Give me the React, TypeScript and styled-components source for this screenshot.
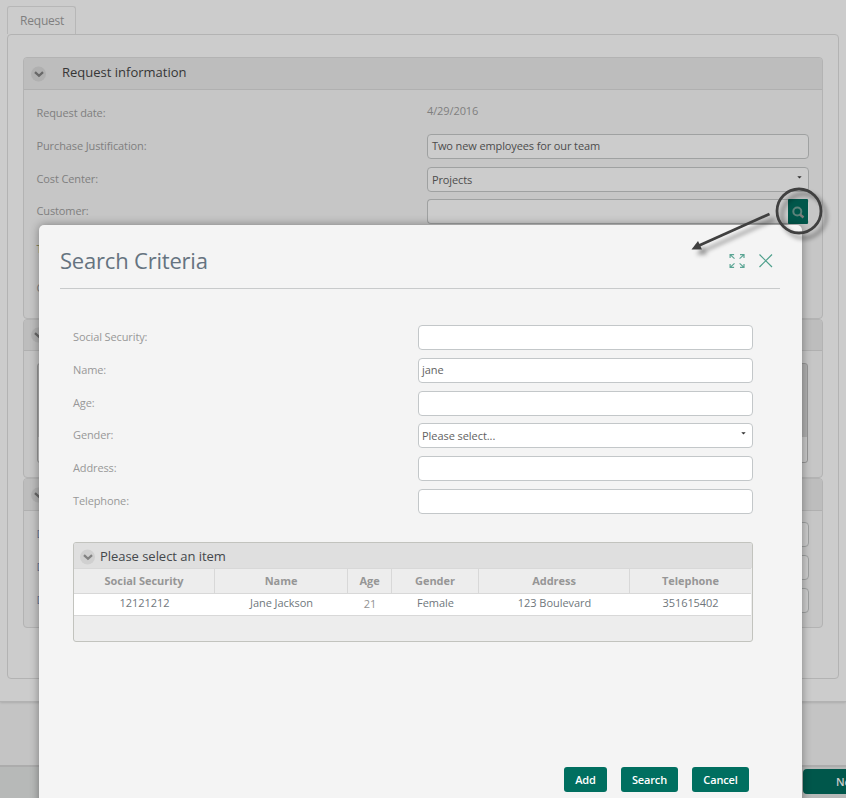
import React from "react";
import styled, { createGlobalStyle } from "styled-components";

const GlobalStyle = createGlobalStyle`
  *, *::before, *::after { box-sizing: border-box; }
  body { margin: 0; overflow: hidden; font: 11px/15px "Open Sans", sans-serif; background: #b7b9b8; }
`;

const Screen = styled.div`
  position: relative;
  width: 846px;
  height: 798px;
  overflow: hidden;
  display: flex;
  flex-direction: column;
`;

const Sheet = styled.main`
  height: 702px;
  flex: none;
  padding: 6px 7px 0;
  background: #cccccc;
  border-bottom: 1px solid #b2b2b2;
  box-shadow: 0 1px 2px rgba(0, 0, 0, 0.12);
  z-index: 1;
`;

const Tab = styled.div`
  width: 69px;
  height: 28px;
  padding-left: 12px;
  border: 1px solid #b7b7b7;
  border-bottom: 0;
  border-radius: 3px 3px 0 0;
  font-size: 12px;
  letter-spacing: -0.2px;
  line-height: 27px;
  color: #7f7f7f;
`;

const TabPanel = styled.div`
  width: 832px;
  height: 645px;
  padding: 22px 15px;
  border: 1px solid #b3b3b3;
  border-radius: 4px;
`;

const Section = styled.section<{ $height: number }>`
  height: ${(p) => p.$height}px;
  background: #c6c6c6;
  border: 1px solid #b3b3b3;
  border-radius: 4px;
  overflow: hidden;
`;

const SectionHeader = styled.header<{ $height: number }>`
  display: flex;
  align-items: center;
  gap: 16px;
  height: ${(p) => p.$height}px;
  padding: 0 7px;
  background: #bdbdbd;
  border-bottom: 1px solid #b0b0b0;
  font-size: 13px;
  color: #363636;
`;

const SectionTitle = styled.span`
  padding-bottom: 3px;
`;

const SectionRows = styled.div<{ $top: number }>`
  padding: ${(p) => p.$top}px 13px 0;
`;

const Row = styled.div<{ $height?: number }>`
  display: grid;
  grid-template-columns: 390px 382px;
  align-items: center;
  height: ${(p) => p.$height ?? 33}px;
  color: #7f7f7f;
`;

const Label = styled.span<{ $lift?: number; $color?: string }>`
  padding-bottom: ${(p) => p.$lift ?? 2}px;
  margin-left: -0.5px;
  letter-spacing: -0.12px;
  color: ${(p) => p.$color ?? "inherit"};
`;

const Value = styled.span`
  padding-bottom: 6px;
  letter-spacing: -0.1px;
`;

const Field = styled.div`
  display: flex;
  justify-content: space-between;
  height: 25px;
  padding: 0 6px 0 4px;
  line-height: 22px;
  letter-spacing: -0.12px;
  color: #4c4c4c;
  background: #cccccc;
  border: 1px solid #9fa1a1;
  border-radius: 4px;
`;

const SelectField = styled(Field)`
  line-height: 24px;
`;

const LookupField = styled(Field)`
  margin-top: -1px;
  padding-right: 1px;
  border-right: 0;
`;

const LookupButton = styled.span`
  display: flex;
  align-items: center;
  justify-content: center;
  width: 20px;
  height: 25px;
  margin-top: -1px;
  border-radius: 1px;
  background: #00574b;
`;

const TextArea = styled.div`
  height: 100px;
  margin: 12px 14px 0 13px;
  background: linear-gradient(#afafaf 73px, #c8c8c8 73px);
  border: 1px solid #969696;
  border-radius: 3px;
`;

const Gutter = styled.div`
  height: 63px;
  flex: none;
  background: #c4c4c4;
`;

const Footer = styled.footer`
  flex: 1;
  display: flex;
  justify-content: flex-end;
  padding-top: 2px;
  background: #b7b9b8;
  border-top: 2px solid #acacac;
`;

const NextButton = styled.div`
  width: 43px;
  height: 25px;
  padding-left: 33px;
  border-radius: 4px 0 0 4px;
  background: #00574b;
  color: #cccccc;
  font-weight: 600;
  line-height: 25px;
  overflow: hidden;
  white-space: nowrap;
`;

const Modal = styled.div`
  position: absolute;
  z-index: 2;
  left: 39px;
  top: 225px;
  width: 763px;
  height: 620px;
  padding: 0 22px 0 21px;
  background: #f4f4f4;
  border-radius: 5px;
  box-shadow: 0 0 10px rgba(0, 0, 0, 0.38);
`;

const ModalHeader = styled.header`
  display: flex;
  align-items: center;
  height: 64px;
  padding: 8px 7px 0 0;
  border-bottom: 1px solid #c8cacb;
`;

const ModalTitle = styled.h1`
  flex: 1;
  margin: 0;
  padding-bottom: 2px;
  font-size: 22px;
  line-height: 30px;
  letter-spacing: -0.2px;
  font-weight: 400;
  color: #657380;
`;

const ModalForm = styled.div`
  display: grid;
  grid-template-columns: 345px 335px;
  grid-template-rows: 33px 33px 32px 33px 33px 25px;
  padding: 36px 0 0 13px;
`;

const ModalLabel = styled.label`
  line-height: 24px;
  letter-spacing: -0.12px;
  color: #989898;
`;

const ModalField = styled.div<{ $select?: boolean }>`
  display: flex;
  justify-content: space-between;
  height: 25px;
  padding: 0 6px 0 3px;
  background: #ffffff;
  border: 1px solid #c3c7c9;
  border-radius: 4px;
  line-height: ${(p) => (p.$select ? 24 : 22)}px;
  letter-spacing: -0.06px;
  color: #626262;
`;

const TableBox = styled.div`
  width: 680px;
  height: 100px;
  margin: 28px 0 0 13px;
  background: #ededed;
  border: 1px solid #c2c3be;
  border-radius: 3px;
  overflow: hidden;
`;

const TableTitle = styled.div`
  display: flex;
  align-items: center;
  gap: 5px;
  height: 25px;
  padding: 2px 6px 0;
  background: #dfdfdf;
  font-size: 13px;
  letter-spacing: -0.04px;
  color: #44484c;
`;

const TableRow = styled.div<{ $head?: boolean }>`
  display: grid;
  grid-template-columns: 141px 133px 44px 87px 151px 121px;
  width: 677px;
  height: ${(p) => (p.$head ? 26 : 22)}px;
  background: ${(p) => (p.$head ? "#ededed" : "#ffffff")};
  border: solid #d8d8d8;
  border-width: ${(p) => (p.$head ? "1px 0" : "0 0 1px")};
  text-align: center;
  font-weight: ${(p) => (p.$head ? 700 : 400)};
  line-height: ${(p) => (p.$head ? 24 : 18)}px;
  letter-spacing: -0.05px;
  color: ${(p) => (p.$head ? "#969696" : "#6f777c")};
`;

const Cell = styled.span<{ $divider?: boolean; $muted?: boolean }>`
  border-right: ${(p) => (p.$divider ? "1px solid #d8d8d8" : "0")};
  padding-top: ${(p) => (p.$muted ? 1 : 0)}px;
  color: ${(p) => (p.$muted ? "#929292" : "inherit")};
`;

const Actions = styled.div`
  display: flex;
  justify-content: flex-end;
  padding: 125px 31px 0 0;
`;

const ActionButton = styled.button<{ $width: number }>`
  width: ${(p) => p.$width}px;
  height: 25px;
  margin-left: 14px;
  padding: 0;
  border: 0;
  border-radius: 3px;
  background: #006f60;
  color: #ffffff;
  font: 600 11px/25px "Open Sans", sans-serif;
  letter-spacing: -0.15px;
`;

const Callout = styled.svg`
  position: absolute;
  z-index: 3;
  left: 680px;
  top: 180px;
`;

const CaretSvg = styled.svg`
  flex: none;
  margin-top: 8px;
`;

const ToolIcon = styled.svg<{ $gap?: number }>`
  flex: none;
  margin-left: ${(p) => p.$gap ?? 0}px;
`;

const Caret = () => (
  <CaretSvg width="5" height="3" viewBox="0 0 5 3">
    <path d="M.3 .3h4.400L2.500 2.600z" fill="#303030" />
  </CaretSvg>
);

const Chevron = ({ dark }: { dark?: boolean }) => (
  <svg width="15" height="16" viewBox="0 0 15 16">
    <circle cx="7.5" cy="8" r="7.5" fill={dark ? "#b0b0b0" : "#d0d0d0"} />
    <path d="M4 6.2 8 9.8 12 6.2" fill="none" stroke={dark ? "#686868" : "#828282"} strokeWidth="2.3" />
  </svg>
);

const formFields = [
  { label: "Social Security:", value: "" },
  { label: "Name:", value: "jane" },
  { label: "Age:", value: "" },
  { label: "Gender:", value: "Please select...", select: true },
  { label: "Address:", value: "" },
  { label: "Telephone:", value: "" },
];

const columns = ["Social Security", "Name", "Age", "Gender", "Address", "Telephone"];
const record = ["12121212", "Jane Jackson", "21", "Female", "123 Boulevard", "351615402"];

export default function App() {
  return (
    <Screen>
      <GlobalStyle />
      <Sheet>
        <Tab>Request</Tab>
        <TabPanel>
          <Section $height={262}>
            <SectionHeader $height={32}>
              <Chevron dark />
              <SectionTitle>Request information</SectionTitle>
            </SectionHeader>
            <SectionRows $top={7}>
              <Row>
                <Label>Request date:</Label>
                <Value>4/29/2016</Value>
              </Row>
              <Row>
                <Label>Purchase Justification:</Label>
                <Field>Two new employees for our team</Field>
              </Row>
              <Row>
                <Label>Cost Center:</Label>
                <SelectField>
                  Projects
                  <Caret />
                </SelectField>
              </Row>
              <Row $height={32}>
                <Label $lift={3}>Customer:</Label>
                <LookupField>
                  <span />
                  <LookupButton>
                    <svg width="14" height="14" viewBox="0 0 14 14">
                      <circle cx="6.3" cy="6.5" r="4" fill="none" stroke="#5c827a" strokeWidth="2" />
                      <path d="m9 9.500 3.500 3" stroke="#7d7c7a" strokeWidth="2.4" />
                    </svg>
                  </LookupButton>
                </LookupField>
              </Row>
              <Row $height={40}>
                <Label $lift={0} $color="#77774a">T</Label>
              </Row>
              <Row $height={40}>
                <Label>C</Label>
              </Row>
            </SectionRows>
          </Section>
          <Section $height={159}>
            <SectionHeader $height={31}>
              <Chevron dark />
            </SectionHeader>
            <TextArea />
          </Section>
          <Section $height={150}>
            <SectionHeader $height={32}>
              <Chevron dark />
            </SectionHeader>
            <SectionRows $top={7}>
              {[0, 1, 2].map((i) => (
                <Row key={i}>
                  <Label $color="#6a7699">D</Label>
                  <Field />
                </Row>
              ))}
            </SectionRows>
          </Section>
        </TabPanel>
      </Sheet>
      <Gutter />
      <Footer>
        <NextButton>Ne</NextButton>
      </Footer>

      <Modal>
        <ModalHeader>
          <ModalTitle>Search Criteria</ModalTitle>
          <ToolIcon width="16" height="16" viewBox="0 0 16 16" fill="none" stroke="#5ba594" strokeWidth="1.2">
            <path d="M1.100 5V1.600h4M1.100 1.600l4.400 4M11 1.600h4V5M15 1.600l-4.400 4M1.100 11v3.400h4M1.100 14.400l4.400-4M11 14.400h4V11M15 14.400l-4.400-4" />
          </ToolIcon>
          <ToolIcon $gap={13} width="15" height="15" viewBox="0 0 15 15" fill="none" stroke="#4fa08c" strokeWidth="1.2">
            <path d="m1.500 1.500 12.500 12.500M14 1.500 1.500 14" />
          </ToolIcon>
        </ModalHeader>
        <ModalForm>
          {formFields.map((f) => (
            <React.Fragment key={f.label}>
              <ModalLabel>{f.label}</ModalLabel>
              <ModalField $select={f.select}>
                {f.value}
                {f.select && <Caret />}
              </ModalField>
            </React.Fragment>
          ))}
        </ModalForm>
        <TableBox>
          <TableTitle>
            <Chevron />
            Please select an item
          </TableTitle>
          <TableRow $head>
            {columns.map((c, i) => (
              <Cell key={c} $divider={i < columns.length - 1}>
                {c}
              </Cell>
            ))}
          </TableRow>
          <TableRow>
            {record.map((v, i) => (
              <Cell key={v} $muted={i === 2}>
                {v}
              </Cell>
            ))}
          </TableRow>
        </TableBox>
        <Actions>
          <ActionButton $width={43}>Add</ActionButton>
          <ActionButton $width={57}>Search</ActionButton>
          <ActionButton $width={57}>Cancel</ActionButton>
        </Actions>
      </Modal>

      <Callout width="160" height="90" viewBox="680 180 160 90">
        <defs>
          <filter id="soft" x="-20%" y="-20%" width="150%" height="150%">
            <feDropShadow dx="5" dy="5" stdDeviation="2" floodColor="#000" floodOpacity="0.4" />
          </filter>
        </defs>
        <g filter="url(#soft)">
          <circle cx="799" cy="211" r="22" fill="none" stroke="#404040" strokeWidth="2.8" />
          <path d="M769.5 214 698 246" stroke="#404040" strokeWidth="2.8" />
          <path d="m691.500 249.500 6.500-8.500 4 8.500z" fill="#404040" />
        </g>
      </Callout>
    </Screen>
  );
}
